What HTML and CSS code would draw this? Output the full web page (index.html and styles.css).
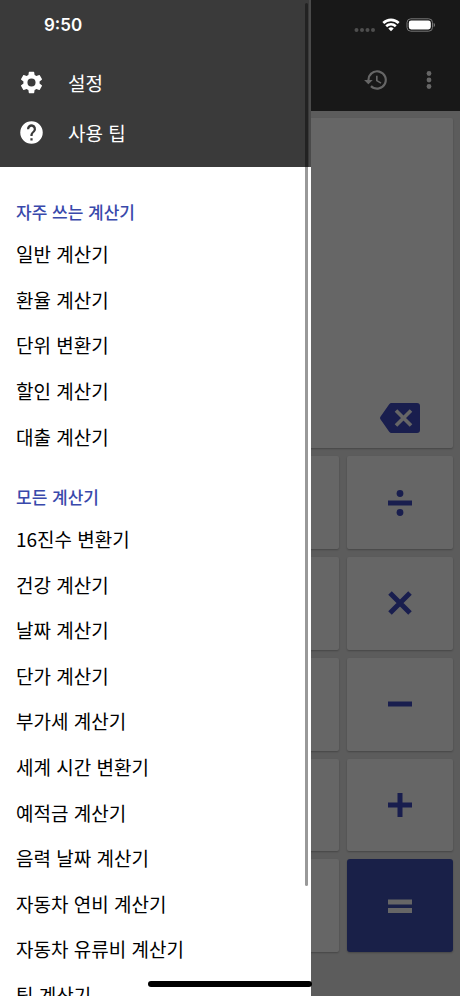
FILE: index.html
```html
<!DOCTYPE html>
<html lang="ko">
<head>
<meta charset="utf-8">
<meta name="viewport" content="width=device-width, initial-scale=1">
<title>계산기</title>
<link rel="stylesheet" href="styles.css">
</head>
<body>
<div class="app">
  <header class="appbar">
    <button class="icon-button" aria-label="기록"><svg class="bar-icon" viewBox="0 0 24 24"><path d="M13 3a9 9 0 0 0-9 9H1l3.900 3.900.1.1 4-4H6a7 7 0 1 1 2.060 4.940l-1.420 1.420A9 9 0 1 0 13 3zm-1 5v5l4.280 2.540.72-1.210-3.500-2.080V8z"/></svg></button>
    <button class="icon-button" aria-label="더보기"><svg class="bar-icon" viewBox="0 0 24 24"><circle cx="12" cy="6" r="2.200"/><circle cx="12" cy="12" r="2.200"/><circle cx="12" cy="18" r="2.200"/></svg></button>
  </header>
  <main class="calculator">
    <section class="display">
      <button class="icon-button" aria-label="지우기"><svg class="backspace" viewBox="0 0 40 30"><path class="shape" d="M11.500 0H37a3 3 0 0 1 3 3v24a3 3 0 0 1-3 3H11.500a3 3 0 0 1-2.300-1.200L.6 16.500a2.500 2.500 0 0 1 0-3L9.200 1.200A3 3 0 0 1 11.500 0z"/><path class="cross" d="M16 7.500l15 15M31 7.500l-15 15"/></svg></button>
    </section>
    <section class="keys">
      <div class="key"></div><div class="key"></div><div class="key"></div>
      <button class="key" aria-label="나누기"><svg class="glyph" viewBox="0 0 28 28"><path d="M2 14h24"/><circle cx="14" cy="4.500" r="3.400"/><circle cx="14" cy="23.500" r="3.400"/></svg></button>
      <div class="key"></div><div class="key"></div><div class="key"></div>
      <button class="key" aria-label="곱하기"><svg class="glyph" viewBox="0 0 28 28"><path d="M4 4l20 20M24 4L4 24"/></svg></button>
      <div class="key"></div><div class="key"></div><div class="key"></div>
      <button class="key" aria-label="빼기"><svg class="glyph" viewBox="0 0 28 28"><path d="M2 14h24"/></svg></button>
      <div class="key"></div><div class="key"></div><div class="key"></div>
      <button class="key" aria-label="더하기"><svg class="glyph" viewBox="0 0 28 28"><path d="M2 14h24M14 2v24"/></svg></button>
      <div class="key"></div><div class="key"></div><div class="key"></div>
      <button class="key equals" aria-label="계산"><svg class="glyph" viewBox="0 0 28 28"><path d="M2 10h24M2 18.500h24"/></svg></button>
    </section>
  </main>
</div>
<div class="scrim"></div>

<aside class="drawer">
  <div class="drawer-head">
    <a class="head-link" href="#settings"><svg class="head-icon" viewBox="0 0 24 24"><path d="M19.140 12.940c.04-.3.06-.61.06-.94 0-.32-.02-.64-.07-.94l2.030-1.580a.49.49 0 0 0 .12-.61l-1.920-3.320a.488.488 0 0 0-.59-.22l-2.390.96c-.5-.38-1.030-.7-1.620-.94l-.36-2.540a.484.484 0 0 0-.48-.41h-3.840c-.24 0-.43.17-.47.41l-.36 2.540c-.59.24-1.130.57-1.620.94l-2.390-.96c-.22-.08-.47 0-.59.22L2.740 8.870c-.12.21-.08.47.12.61l2.030 1.580c-.05.3-.09.63-.09.94s.02.64.07.94l-2.030 1.580a.49.49 0 0 0-.12.61l1.920 3.320c.12.22.37.29.59.22l2.390-.96c.5.38 1.030.7 1.620.94l.36 2.540c.05.24.24.41.48.41h3.840c.24 0 .44-.17.47-.41l.36-2.540c.59-.24 1.130-.56 1.620-.94l2.390.96c.22.08.47 0 .59-.22l1.920-3.320c.12-.22.07-.47-.12-.61zM12 15.600a3.600 3.600 0 1 1 0-7.200 3.600 3.600 0 0 1 0 7.200z"/></svg>설정</a>
    <a class="head-link" href="#tips"><svg class="head-icon" viewBox="0 0 24 24"><path d="M12 2a10 10 0 1 0 0 20 10 10 0 0 0 0-20zm1 17h-2v-2h2zm2.070-7.750-.9.920C13.450 12.900 13 13.500 13 15h-2v-.5c0-1.100.45-2.100 1.170-2.830l1.240-1.260A2 2 0 1 0 10 9H8a4 4 0 1 1 7.070 2.250z"/></svg>사용 팁</a>
  </div>
  <nav class="menu">
    <h2 class="menu-title">자주 쓰는 계산기</h2>
    <ul class="menu-list favorites">
      <li><a href="#basic">일반 계산기</a></li>
      <li><a href="#currency">환율 계산기</a></li>
      <li><a href="#unit">단위 변환기</a></li>
      <li><a href="#discount">할인 계산기</a></li>
      <li><a href="#loan">대출 계산기</a></li>
    </ul>
    <h2 class="menu-title">모든 계산기</h2>
    <ul class="menu-list all">
      <li><a href="#hex">16진수 변환기</a></li>
      <li><a href="#health">건강 계산기</a></li>
      <li><a href="#date">날짜 계산기</a></li>
      <li><a href="#price">단가 계산기</a></li>
      <li><a href="#vat">부가세 계산기</a></li>
      <li><a href="#time">세계 시간 변환기</a></li>
      <li><a href="#savings">예적금 계산기</a></li>
      <li><a href="#lunar">음력 날짜 계산기</a></li>
      <li><a href="#mileage">자동차 연비 계산기</a></li>
      <li><a href="#fuel">자동차 유류비 계산기</a></li>
      <li><a href="#tip">팁 계산기</a></li>
    </ul>
  </nav>
  <div class="scroll-thumb"></div>
</aside>

<div class="statusbar">
  <time class="clock">9:50</time>
  <svg class="signal" viewBox="0 0 22 6"><circle cx="2.500" cy="3" r="2"/><circle cx="8" cy="3" r="2"/><circle cx="13.500" cy="3" r="2"/><circle cx="19" cy="3" r="2"/></svg>
  <svg class="wifi" viewBox="0 0 18 14"><path d="M1.300 5a11 11 0 0 1 15.400 0M4.200 8.200a7 7 0 0 1 9.600 0"/><path class="solid" d="M9 13.300 6.300 10.600a4 4 0 0 1 5.400 0z"/></svg>
  <svg class="battery" viewBox="0 0 30 14"><rect class="case" x="1" y=".8" width="25.500" height="12.400" rx="3.800"/><rect class="charge" x="2.800" y="2.500" width="22" height="9" rx="2.400"/><path class="cap" d="M27.700 4.800v4.400c1.800-.7 1.800-3.700 0-4.400z"/></svg>
</div>
<div class="home-indicator"></div>
</body>
</html>
```
FILE: styles.css
```css
* { box-sizing: border-box; }

body {
  margin: 0;
  height: 100vh;
  overflow: hidden;
  position: relative;
  font-family: "Noto Sans CJK KR", sans-serif;
  font-size: 19px;
  color: #000;
}

button {
  border: 0;
  padding: 0;
  background: none;
}

svg { display: block; }

a {
  color: inherit;
  text-decoration: none;
}

/* Calculator screen */
.app {
  height: 100%;
  display: flex;
  flex-direction: column;
  background: #e6e6e6;
}

.appbar {
  height: 111px;
  padding: 49px 18px 0 0;
  display: flex;
  justify-content: flex-end;
  align-items: center;
  gap: 27px;
  background: #3c3c3c;
}

.bar-icon {
  width: 26px;
  height: 26px;
  fill: #fff;
}

.calculator {
  flex: 1;
  padding: 7px 7px 44px 5px;
  display: grid;
  grid-template-rows: 2fr 3fr;
  gap: 8px;
}

.display {
  padding: 0 33px 15px 0;
  display: flex;
  justify-content: flex-end;
  align-items: flex-end;
  background: #fff;
  border-radius: 2px;
  box-shadow: 0 1px 2px rgba(0, 0, 0, 0.25);
}

.backspace {
  width: 40px;
  height: 30px;
}

.backspace .shape { fill: #3f4bc4; }

.backspace .cross {
  stroke: #fff;
  stroke-width: 3.6;
}

.keys {
  display: grid;
  grid-template-columns: repeat(4, 1fr);
  grid-auto-rows: 1fr;
  gap: 8px;
}

.key {
  display: flex;
  align-items: center;
  justify-content: center;
  background: #fff;
  border-radius: 2px;
  box-shadow: 0 1px 2px rgba(0, 0, 0, 0.25);
}

.glyph {
  width: 28px;
  height: 28px;
  fill: #3f4bc4;
  stroke: #3f4bc4;
  stroke-width: 5;
}

.glyph circle { stroke: none; }

.equals {
  background: #3f51b5;
  border-radius: 3px;
}

.equals .glyph { stroke: #fff; }

.scrim {
  position: absolute;
  inset: 0;
  background: rgba(0, 0, 0, 0.6);
}

/* Drawer */
.drawer {
  position: absolute;
  top: 0;
  bottom: 0;
  left: 0;
  width: calc(100% - 149px);
  overflow: hidden;
  background: #fff;
}

.drawer-head {
  height: 167px;
  padding-top: 57px;
  background: #3a3a3a;
  border-right: 2px solid #4a4a4a;
}

.head-link {
  height: 50px;
  padding-left: 18px;
  display: flex;
  align-items: center;
  gap: 23px;
  color: #fff;
}

.head-icon {
  width: 27px;
  height: 27px;
  fill: #fff;
}

.menu { padding: 25px 16px 0; }

.menu-title {
  margin: 0;
  height: 39px;
  line-height: 39px;
  font-size: 17px;
  font-weight: 500;
  color: #3949ab;
}

.menu-list {
  margin: 0;
  padding: 0;
  list-style: none;
  display: grid;
  grid-auto-rows: 1fr;
}

.menu-list a {
  height: 100%;
  display: flex;
  align-items: center;
}

.favorites {
  height: 228px;
  margin-bottom: 18px;
}

.all { height: 501px; }

.scroll-thumb {
  position: absolute;
  top: 3px;
  right: 3px;
  width: 3px;
  height: 883px;
  border-radius: 2px;
  background: rgba(0, 0, 0, 0.4);
}

/* System overlays */
.statusbar {
  position: absolute;
  top: 0;
  left: 0;
  right: 0;
  height: 50px;
  padding: 0 24px 0 44px;
  display: flex;
  align-items: center;
  color: #fff;
}

.clock {
  margin-right: auto;
  font-family: Inter, sans-serif;
  font-size: 17px;
  font-weight: 600;
}

.signal {
  width: 22px;
  height: 6px;
  margin: 10px 6px 0 0;
  fill: #4e4e4e;
}

.wifi {
  width: 18px;
  height: 14px;
  margin-right: 6px;
  fill: none;
  stroke: #fff;
  stroke-width: 2.6;
}

.wifi .solid {
  fill: #fff;
  stroke: none;
}

.battery {
  width: 30px;
  height: 14px;
}

.case {
  fill: none;
  stroke: #777;
  stroke-width: 1;
}

.charge { fill: #fff; }

.cap { fill: #777; }

.home-indicator {
  position: absolute;
  left: 50%;
  bottom: 9px;
  width: 164px;
  height: 6px;
  transform: translateX(-50%);
  border-radius: 3px;
  background: #000;
}
```
